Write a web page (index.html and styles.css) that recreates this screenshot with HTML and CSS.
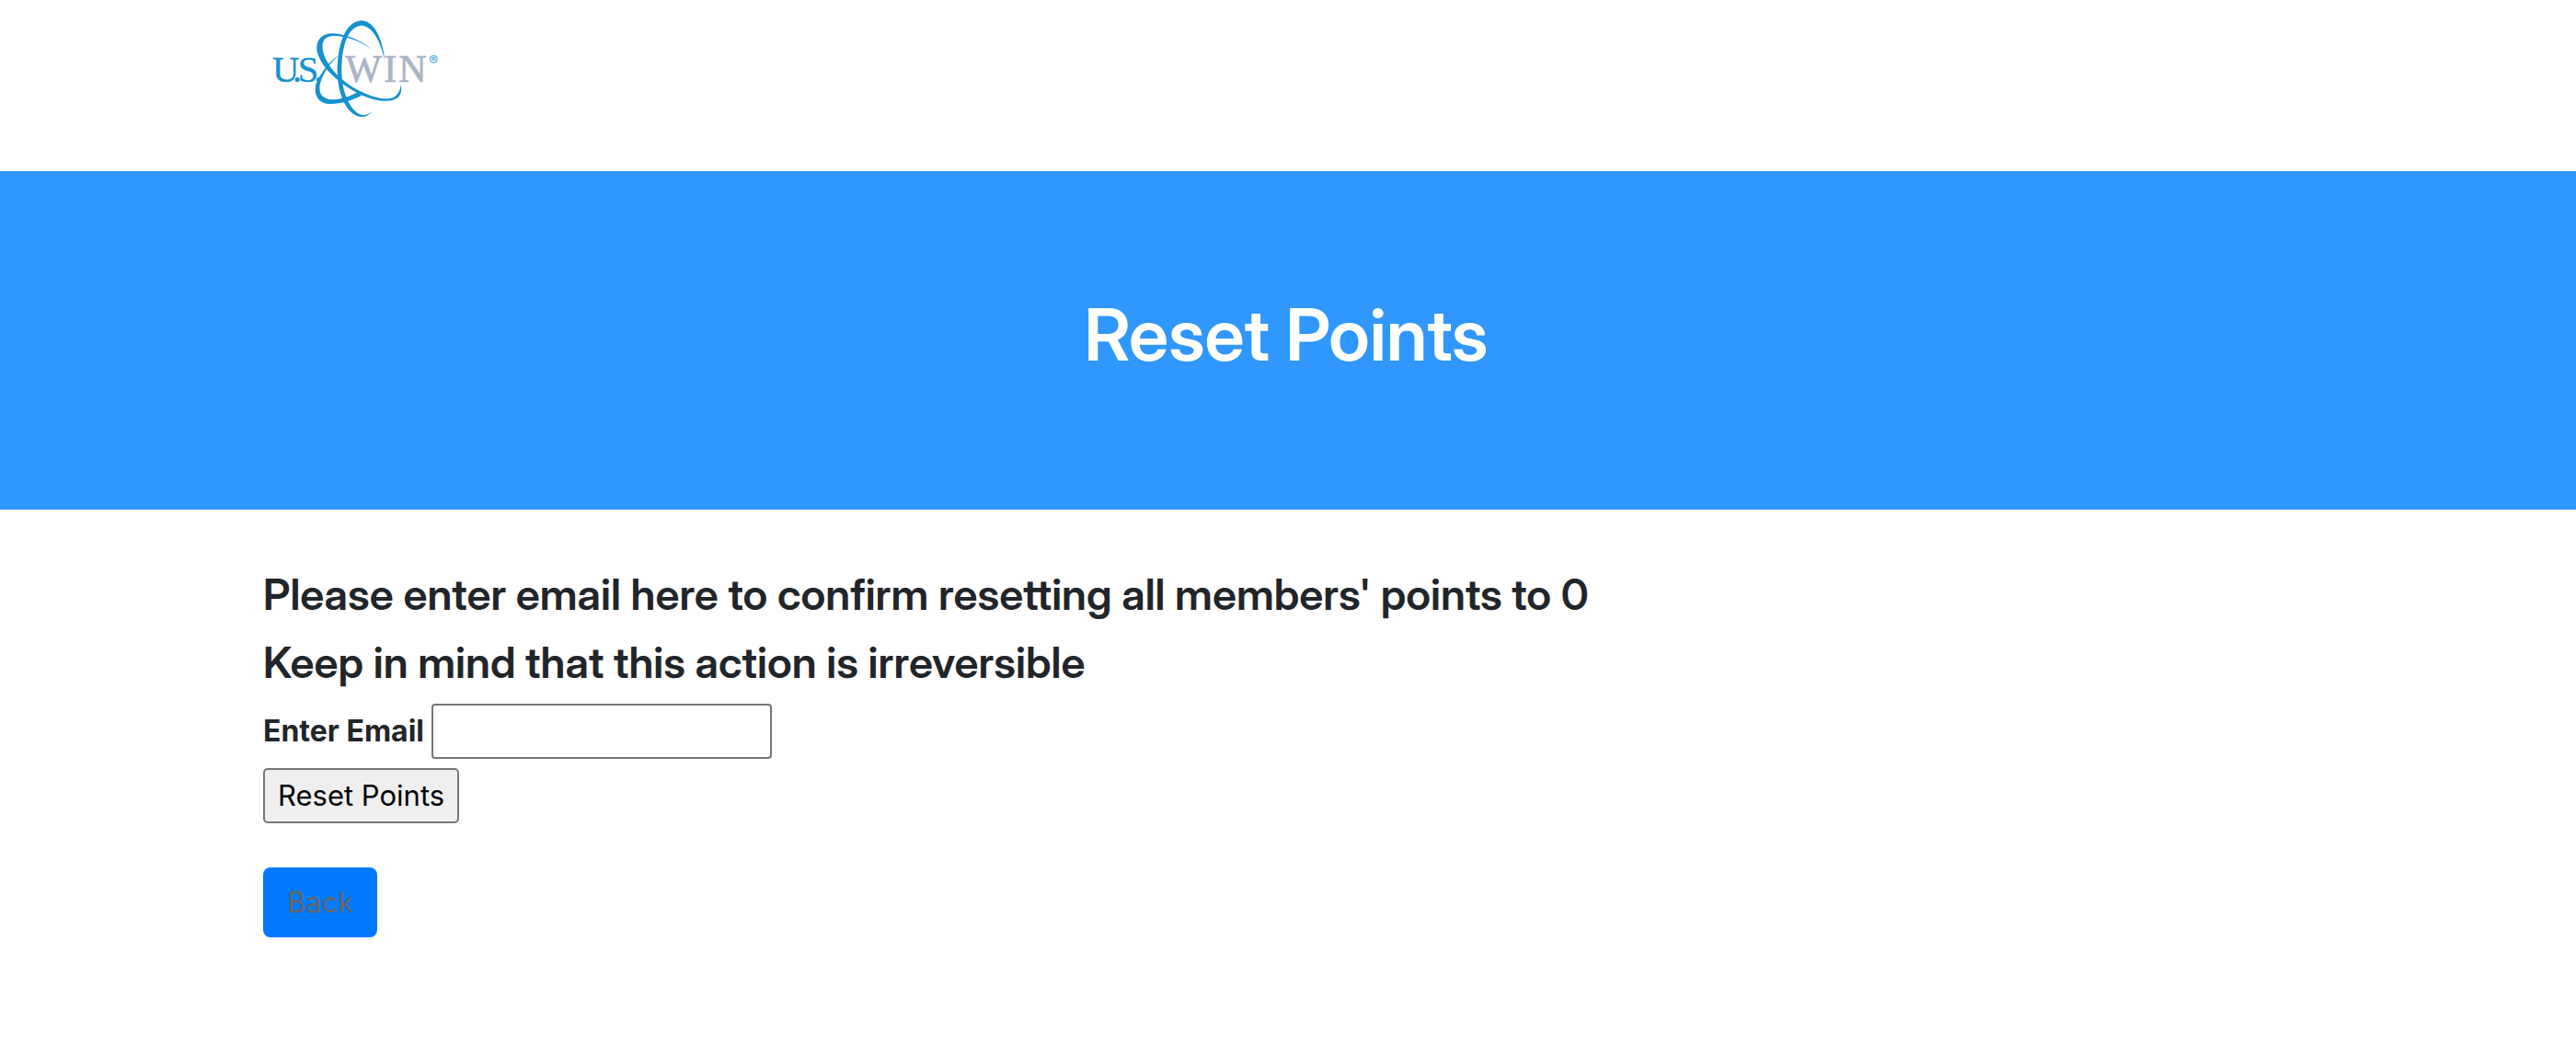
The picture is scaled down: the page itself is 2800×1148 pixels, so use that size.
FILE: index.html
```html
<!DOCTYPE html>
<html lang="en">
<head>
  <meta charset="utf-8">
  <title>Reset Points</title>
  <meta name="viewport" content="width=device-width, initial-scale=1">
  <link rel="stylesheet" href="styles.css">
</head>
<body>
  <header class="site-header">
    <svg class="logo" viewBox="18 0 582 390" role="img" aria-label="U.S. WIN">
      <g class="logo-orbit">
        <path d="M415 168C409 108 385 39 339 37C285 40 260 118 260 205C262 290 298 351 340 351C357 350 366 342 373 332C364 341 354 346 342 345C311 341 275 286 274 202C274 120 294 57 338 53C378 55 401 108 415 168Z"/>
        <path d="M371 130C338 102 283 79 240 79C201 82 186 112 196 145C211 193 262 240 330 276C370 296 428 310 457 289C469 277 471 261 466 247C466 266 456 283 441 289C415 298 372 286 332 266C273 236 228 188 215 143C207 113 212 91 244 87C285 86 330 101 371 130Z"/>
        <path d="M268 148C236 168 206 206 190 245C183 282 199 309 239 309C273 309 310 296 339 282L326 271C302 284 274 295 246 295C210 295 199 274 203 247C212 211 237 171 268 148Z"/>
      </g>
      <g class="logo-text">
        <text class="logo-us" y="237" x="48 114 131 184">U.S.</text>
        <text class="logo-win" y="237" x="286 412 460">WIN</text>
      </g>
      <circle class="logo-ring" cx="574" cy="163" r="12"/>
      <text class="logo-mark" x="574" y="169">R</text>
    </svg>
  </header>
  <section class="hero">
    <h1 class="hero-title">Reset Points</h1>
  </section>
  <main class="content">
    <h4 class="notice">Please enter email here to confirm resetting all members' points to 0</h4>
    <h4 class="notice">Keep in mind that this action is irreversible</h4>
    <form class="reset-form">
      <div class="field">
        <label class="field-label" for="email">Enter Email</label>
        <input class="field-input" id="email" name="email" type="text">
      </div>
      <button class="reset-button" type="submit">Reset Points</button>
    </form>
    <a class="back-button" href="#">Back</a>
  </main>
</body>
</html>
```
FILE: styles.css
```css
* {
  box-sizing: border-box;
}

body {
  margin: 0;
  background: #fff;
  color: #212529;
  font-family: Inter, "Liberation Sans", sans-serif;
  font-size: 32px;
  line-height: 48px;
}

.site-header {
  padding: 10px 286px 46px;
}

.logo {
  display: block;
  width: 194px;
  height: 130px;
}

.logo-orbit {
  fill: #1590d0;
}

.logo-text {
  font-family: "Liberation Serif", serif;
  font-size: 122px;
}

.logo-us {
  fill: #1590d0;
  stroke: #1590d0;
  stroke-width: 1px;
}

.logo-win {
  fill: #a9b4c5;
  stroke: #a9b4c5;
  stroke-width: 2px;
  font-size: 126px;
}

.logo-ring {
  fill: #d5ecf7;
  stroke: #49a9d9;
  stroke-width: 3px;
}

.logo-mark {
  fill: #1590d0;
  font-family: "Liberation Sans", sans-serif;
  font-size: 17px;
  text-anchor: middle;
}

.hero {
  padding: 130px 36px 142px 32px;
  background: #2f97fd;
  color: #fff;
  text-align: center;
}

.hero-title,
.notice {
  font-family: "Inter Display", Inter, "Liberation Sans", sans-serif;
  font-variation-settings: "opsz" 32;
}

.hero-title {
  margin: 0;
  font-size: 78px;
  font-weight: 600;
  line-height: 96px;
}

.content {
  padding: 63px 286px;
}

.notice {
  margin: 0 0 16px;
  font-size: 47px;
  font-weight: 600;
  line-height: 58px;
}

.field {
  display: flex;
  align-items: center;
  gap: 8px;
  margin-bottom: 10px;
}

.field-label {
  font-weight: 700;
}

.field-input {
  width: 370px;
  height: 60px;
  padding: 2px 4px;
  border: 2px solid #767676;
  border-radius: 4px;
  background: #fff;
  font: inherit;
}

.reset-button {
  display: block;
  height: 60px;
  padding: 0 14px;
  border: 2px solid #767676;
  border-radius: 5px;
  background: #efefef;
  color: #000;
  font: inherit;
  font-size: 31px;
}

.back-button {
  display: inline-block;
  margin-top: 48px;
  padding: 14px 26px;
  border-radius: 8px;
  background: #007bff;
  color: #666;
  font-size: 31px;
  text-decoration: none;
}
```
